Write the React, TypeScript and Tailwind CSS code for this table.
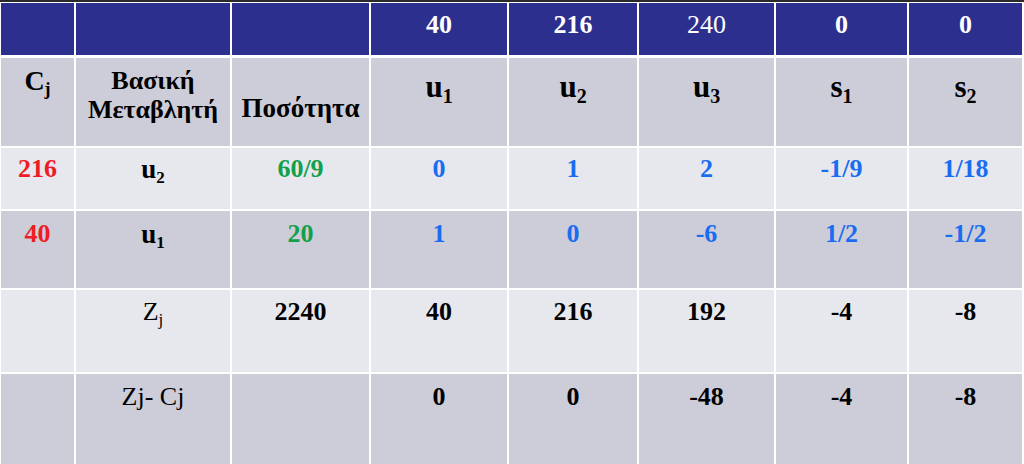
import React from "react";

type Cell = {
  v?: React.ReactNode;
  cls?: string;
};

const RED = "text-[#f01c24]";
const GREEN = "text-[#12a04c]";
const BLUE = "text-[#1a6cf0]";

// variable with subscript, e.g. u₁
function Sym({ b, s, sub = "text-[17px]" }: { b: string; s: string; sub?: string }) {
  return (
    <span>
      {b}
      <sub className={`${sub} relative -bottom-[0.3em]`}>{s}</sub>
    </span>
  );
}

const header: Cell[] = [
  {},
  {},
  {},
  { v: "40", cls: "font-bold" },
  { v: "216", cls: "font-bold" },
  { v: "240" },
  { v: "0", cls: "font-bold" },
  { v: "0", cls: "font-bold" },
];

const bigSub = "text-[20px]";
const big = "font-bold text-[31px] leading-none pt-[13px]";

const titles: Cell[] = [
  { v: <Sym b="C" s="j" sub="text-[18px]" />, cls: "font-bold text-[28px] leading-none pt-[9px]" },
  {
    v: (
      <>
        Βασική
        <br />
        Μεταβλητή
      </>
    ),
    cls: "font-bold text-[26px] leading-[29px] pt-[8px]",
  },
  { v: "Ποσότητα", cls: "font-bold text-[27px] leading-[29px] pt-[36px]" },
  { v: <Sym b="u" s="1" sub={bigSub} />, cls: big },
  { v: <Sym b="u" s="2" sub={bigSub} />, cls: big },
  { v: <Sym b="u" s="3" sub={bigSub} />, cls: big },
  { v: <Sym b="s" s="1" sub={bigSub} />, cls: big },
  { v: <Sym b="s" s="2" sub={bigSub} />, cls: big },
];

const body: { bg: string; h: string; cells: Cell[] }[] = [
  {
    bg: "bg-[#e7e8ee] pt-[8px]",
    h: "h-[61px]",
    cells: [
      { v: "216", cls: `font-bold ${RED}` },
      { v: <Sym b="u" s="2" />, cls: "font-bold text-[27px]" },
      { v: "60/9", cls: `font-bold ${GREEN}` },
      { v: "0", cls: `font-bold ${BLUE}` },
      { v: "1", cls: `font-bold ${BLUE}` },
      { v: "2", cls: `font-bold ${BLUE}` },
      { v: "-1/9", cls: `font-bold ${BLUE}` },
      { v: "1/18", cls: `font-bold ${BLUE}` },
    ],
  },
  {
    bg: "bg-[#cccdd8] pt-[10px]",
    h: "h-[77px]",
    cells: [
      { v: "40", cls: `font-bold ${RED}` },
      { v: <Sym b="u" s="1" />, cls: "font-bold text-[27px]" },
      { v: "20", cls: `font-bold ${GREEN}` },
      { v: "1", cls: `font-bold ${BLUE}` },
      { v: "0", cls: `font-bold ${BLUE}` },
      { v: "-6", cls: `font-bold ${BLUE}` },
      { v: "1/2", cls: `font-bold ${BLUE}` },
      { v: "-1/2", cls: `font-bold ${BLUE}` },
    ],
  },
  {
    bg: "bg-[#e7e8ee] pt-[9px]",
    h: "h-[82px]",
    cells: [
      {},
      { v: <Sym b="Z" s="j" /> },
      { v: "2240", cls: "font-bold" },
      { v: "40", cls: "font-bold" },
      { v: "216", cls: "font-bold" },
      { v: "192", cls: "font-bold" },
      { v: "-4", cls: "font-bold" },
      { v: "-8", cls: "font-bold" },
    ],
  },
  {
    bg: "bg-[#cccdd8] pt-[10px]",
    h: "h-[90px]",
    cells: [
      {},
      { v: "Zj- Cj" },
      {},
      { v: "0", cls: "font-bold" },
      { v: "0", cls: "font-bold" },
      { v: "-48", cls: "font-bold" },
      { v: "-4", cls: "font-bold" },
      { v: "-8", cls: "font-bold" },
    ],
  },
];

const cols = "grid grid-cols-[73px_154px_137px_136px_128px_135px_131px_113px] gap-x-[2px]";

export default function App() {
  return (
    <div className="w-[1024px] h-[464px] bg-white overflow-hidden font-[family-name:'Liberation_Serif',serif] text-black">
      <div className="h-[2px] bg-[#2a2a2a]" />
      <div className="pl-[1px] pt-[1px] flex flex-col gap-y-[2px]">
        {/* header row (objective coefficients) */}
        <div className={`${cols} h-[52px]`}>
          {header.map((c, i) => (
            <div
              key={i}
              className={`bg-[#2d2f8e] text-white text-[26px] leading-none pt-[9px] text-center ${c.cls ?? ""}`}
            >
              {c.v}
            </div>
          ))}
        </div>
        <div className={`${cols} h-[88px] mt-[1px]`}>
          {titles.map((c, i) => (
            <div key={i} className={`bg-[#cccdd8] text-center whitespace-nowrap ${c.cls ?? ""}`}>
              {c.v}
            </div>
          ))}
        </div>
        {body.map((row, r) => (
          <div key={r} className={`${cols} ${row.h}`}>
            {row.cells.map((c, i) => (
              <div
                key={i}
                className={`${row.bg} text-center text-[26px] leading-none ${c.cls ?? ""}`}
              >
                {c.v}
              </div>
            ))}
          </div>
        ))}
      </div>
    </div>
  );
}
